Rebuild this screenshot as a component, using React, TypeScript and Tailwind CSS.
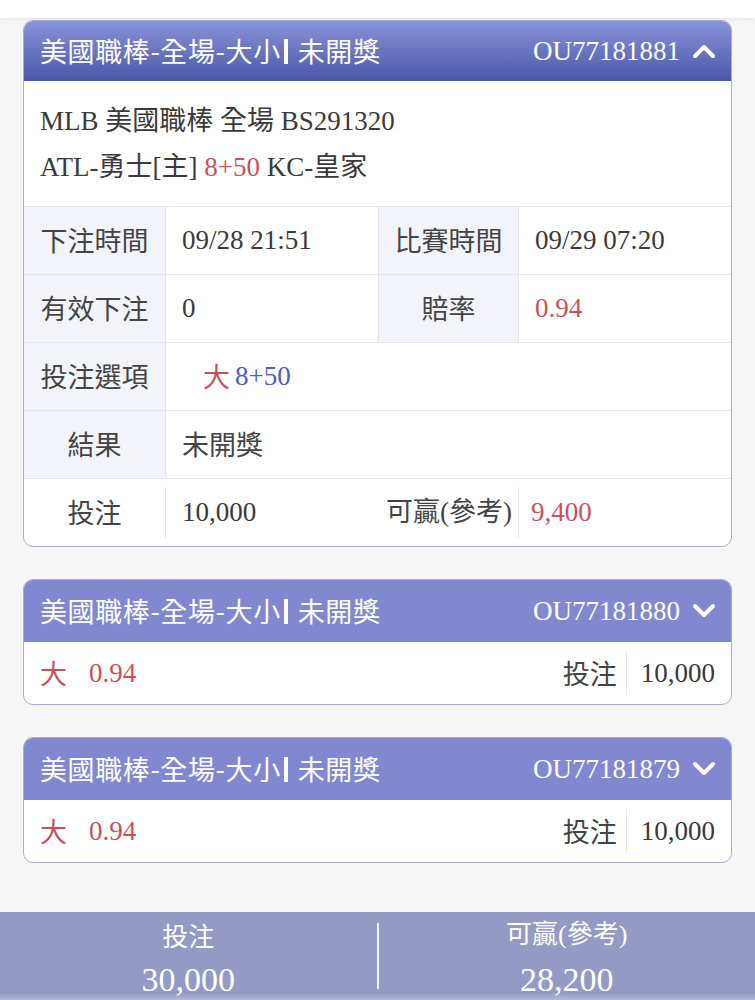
import React from "react";

const serif = "font-['Liberation_Serif','Noto_Sans_CJK_TC',serif]";
const sans = "font-['Noto_Sans_CJK_TC','Noto_Sans',sans-serif]";

interface Bet {
  id: string;
  pick: string;
  odds: string;
  stake: string;
}

const others: Bet[] = [
  { id: "OU77181880", pick: "大", odds: "0.94", stake: "10,000" },
  { id: "OU77181879", pick: "大", odds: "0.94", stake: "10,000" },
];

function Chevron({ up }: { up?: boolean }) {
  return (
    <svg width="24" height="16" viewBox="0 0 24 16" className="shrink-0">
      <polyline
        points={up ? "3,13 12,4 21,13" : "3,3 12,12 21,3"}
        fill="none"
        stroke="white"
        strokeWidth="4"
        strokeLinecap="round"
        strokeLinejoin="round"
      />
    </svg>
  );
}

function Title() {
  return (
    <span className={`${sans} text-[27px] tracking-[0.6px] flex items-center`}>
      美國職棒-全場-大小
      <span className="inline-block w-[4px] h-[25px] bg-white ml-[3px] mr-[10px]" />
      未開獎
    </span>
  );
}

const line = "border-l-[1.5px] border-[#e2e4f0]";

export default function App() {
  return (
    <div className="min-h-screen bg-[#f6f6f6] flex flex-col">
      <div className="h-[18px] bg-white shadow-[0_2px_4px_rgba(0,0,0,0.06)]" />

      <div className="px-[23px] pt-[2px] flex flex-col gap-[32px]">
        {/* 展開的注單 */}
        <div className="rounded-[10px] border-[1.5px] border-[#a9add3] bg-white overflow-hidden">
          <div className="h-[60px] bg-gradient-to-b from-[#8a93d8] to-[#4a58a8] pl-[16px] pr-[15px] flex items-center justify-between text-white">
            <Title />
            <div className="flex items-center gap-[12px]">
              <span className={`${serif} text-[27px]`}>OU77181881</span>
              <Chevron up />
            </div>
          </div>

          <div className={`${serif} px-[16px] pt-[17px] pb-[16px] text-[27px] leading-[46px] text-[#3a3a3a]`}>
            <div>MLB 美國職棒 全場 BS291320</div>
            <div>
              ATL-勇士[主] <span className="text-[#c8505c]">8+50</span> KC-皇家
            </div>
          </div>

          <div className="grid grid-cols-[141px_213px_140px_1fr] auto-rows-[68px] text-[27px] text-[#3a3a3a]">
            {/* 下注時間 / 比賽時間 */}
            <div className="col-span-4 grid grid-cols-subgrid border-t-[1.5px] border-[#e2e4f0]">
              <div className={`${sans} flex items-center justify-center bg-[#f3f4fa] text-[#444]`}>下注時間</div>
              <div className={`${serif} flex items-center pl-[16px] ${line}`}>09/28 21:51</div>
              <div className={`${sans} flex items-center justify-center bg-[#f3f4fa] text-[#444] ${line}`}>比賽時間</div>
              <div className={`${serif} flex items-center pl-[16px] ${line}`}>09/29 07:20</div>
            </div>

            {/* 有效下注 / 賠率 */}
            <div className="col-span-4 grid grid-cols-subgrid border-t-[1.5px] border-[#e2e4f0]">
              <div className={`${sans} flex items-center justify-center bg-[#f3f4fa] text-[#444]`}>有效下注</div>
              <div className={`${serif} flex items-center pl-[16px] ${line}`}>0</div>
              <div className={`${sans} flex items-center justify-center bg-[#f3f4fa] text-[#444] ${line}`}>賠率</div>
              <div className={`${serif} flex items-center pl-[16px] text-[#c8505c] ${line}`}>0.94</div>
            </div>

            {/* 投注選項 */}
            <div className="col-span-4 grid grid-cols-subgrid border-t-[1.5px] border-[#e2e4f0]">
              <div className={`${sans} flex items-center justify-center bg-[#f3f4fa] text-[#444]`}>投注選項</div>
              <div className={`${serif} col-span-3 flex items-center pl-[37px] ${line}`}>
                <span className={`${sans} text-[#c8505c]`}>大</span>
                <span className="ml-[5px] text-[#4a5cc8]">8+50</span>
              </div>
            </div>

            {/* 結果 */}
            <div className="col-span-4 grid grid-cols-subgrid border-t-[1.5px] border-[#e2e4f0]">
              <div className={`${sans} flex items-center justify-center bg-[#f3f4fa] text-[#444]`}>結果</div>
              <div className={`${sans} col-span-3 flex items-center pl-[16px] text-[#444] ${line}`}>未開獎</div>
            </div>

            {/* 投注 / 可贏 */}
            <div className="col-span-4 grid grid-cols-subgrid border-t-[1.5px] border-[#e2e4f0]">
              <div className={`${sans} flex items-center justify-center text-[#444]`}>投注</div>
              <div className="flex items-center py-[8px]">
                <div className={`${serif} h-full w-full flex items-center pl-[16px] ${line}`}>10,000</div>
              </div>
              <div className={`${serif} flex items-center justify-end pr-[6px] text-[#444]`}>可贏(參考)</div>
              <div className="flex items-center py-[8px]">
                <div className={`${serif} h-full w-full flex items-center pl-[12px] text-[#c8505c] ${line}`}>9,400</div>
              </div>
            </div>
          </div>
        </div>

        {/* 收合的注單 */}
        {others.map((b) => (
          <div key={b.id} className="rounded-[10px] border-[1.5px] border-[#a9add3] bg-white overflow-hidden">
            <div className="h-[62px] bg-[#8089d0] pl-[16px] pr-[15px] flex items-center justify-between text-white">
              <Title />
              <div className="flex items-center gap-[12px]">
                <span className={`${serif} text-[27px]`}>{b.id}</span>
                <Chevron />
              </div>
            </div>
            <div className="h-[62px] px-[16px] flex items-center justify-between">
              <div className={`${serif} flex items-center text-[27px] text-[#c8505c]`}>
                <span className={sans}>{b.pick}</span>
                <span className="ml-[22px]">{b.odds}</span>
              </div>
              <div className="flex items-center h-[44px]">
                <span className={`${sans} text-[27px] text-[#444] pr-[9px]`}>投注</span>
                <span className={`${serif} h-full flex items-center text-[27px] text-[#3a3a3a] pl-[14px] ${line}`}>
                  {b.stake}
                </span>
              </div>
            </div>
          </div>
        ))}
      </div>

      {/* 合計 */}
      <div className="mt-[49px] h-[88px] bg-gradient-to-b from-[#959ac4] from-[92%] to-[#b4b8d8] flex items-center text-white">
        <div className="flex-1 flex flex-col items-center pt-[4px]">
          <span className={`${sans} text-[26px] leading-[44px]`}>投注</span>
          <span className={`${serif} text-[34px] leading-[46px]`}>30,000</span>
        </div>
        <div className="w-[2px] h-[66px] bg-white/90" />
        <div className="flex-1 flex flex-col items-center pt-[4px]">
          <span className={`${serif} text-[26px] leading-[44px]`}>可贏(參考)</span>
          <span className={`${serif} text-[34px] leading-[46px]`}>28,200</span>
        </div>
      </div>
    </div>
  );
}
